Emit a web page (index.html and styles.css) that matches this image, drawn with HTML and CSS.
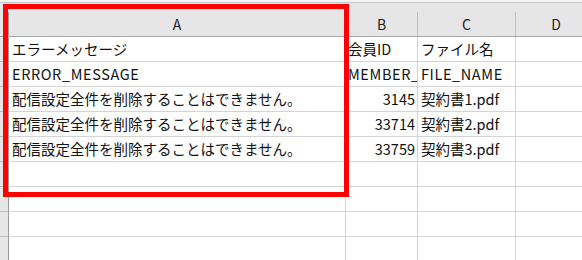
FILE: index.html
```html
<!DOCTYPE html>
<html lang="ja">
<head>
<meta charset="utf-8">
<link rel="stylesheet" href="styles.css">
</head>
<body>
<div class="sheet">
  <div class="topstrip"></div>
  <div class="header">
    <div class="hrow">
      <div class="hcell corner"></div>
      <div class="hcell">A</div>
      <div class="hcell">B</div>
      <div class="hcell">C</div>
      <div class="hcell last">D</div>
    </div>
  </div>
  <div class="grid">
    <div class="rh"></div><div class="c a">エラーメッセージ</div><div class="c b">会員ID</div><div class="c cc">ファイル名</div><div class="c d"></div>
    <div class="rh"></div><div class="c a caps">ERROR_MESSAGE</div><div class="c b caps">MEMBER_ID</div><div class="c cc caps">FILE_NAME</div><div class="c d"></div>
    <div class="rh"></div><div class="c a">配信設定全件を削除することはできません。</div><div class="c b num">3145</div><div class="c cc">契約書1.pdf</div><div class="c d"></div>
    <div class="rh"></div><div class="c a">配信設定全件を削除することはできません。</div><div class="c b num">33714</div><div class="c cc">契約書2.pdf</div><div class="c d"></div>
    <div class="rh"></div><div class="c a">配信設定全件を削除することはできません。</div><div class="c b num">33759</div><div class="c cc">契約書3.pdf</div><div class="c d"></div>
    <div class="rh"></div><div class="c a"></div><div class="c b"></div><div class="c cc"></div><div class="c d"></div>
    <div class="rh"></div><div class="c a"></div><div class="c b"></div><div class="c cc"></div><div class="c d"></div>
    <div class="rh"></div><div class="c a"></div><div class="c b"></div><div class="c cc"></div><div class="c d"></div>
    <div class="rh"></div><div class="c a"></div><div class="c b"></div><div class="c cc"></div><div class="c d"></div>
  </div>
  <div class="highlight"></div>
</div>
</body>
</html>
```

FILE: styles.css
```css
* { box-sizing: border-box; }
html, body {
  margin: 0;
  padding: 0;
  background: #ffffff;
  overflow: hidden;
}
body {
  width: 582px;
  height: 260px;
  font-family: "Noto Sans CJK JP", "Noto Sans", sans-serif;
  font-size: 14.5px;
  color: #111111;
}
.sheet {
  position: relative;
  width: 582px;
  height: 260px;
  overflow: hidden;
}
.topstrip {
  height: 3px;
  background: #f3f3f3;
  border-bottom: 1px solid #c6c6c6;
}
.header {
  background: #e6e6e6;
  padding-top: 9px;
}
.hrow {
  display: grid;
  grid-template-columns: 9px 337px 72px 98px 80px;
  height: 25px;
  border-bottom: 1px solid #a6a6a6;
}
.hcell {
  border-right: 1px solid #c0c0c0;
  text-align: center;
  line-height: 24px;
  font-size: 14px;
  color: #222222;
}
.hcell.corner { border-right: 1px solid #9a9a9a; }
.hcell.last { border-right: none; }
.grid {
  display: grid;
  grid-template-columns: 9px 337px 72px 98px 80px;
  grid-auto-rows: 25px;
}
.rh {
  background: #e6e6e6;
  border-right: 1px solid #9a9a9a;
  border-bottom: 1px solid #bdbdbd;
}
.c {
  border-right: 1px solid #d4d4d4;
  border-bottom: 1px solid #d4d4d4;
  line-height: 24px;
  white-space: nowrap;
  overflow: hidden;
}
.caps { letter-spacing: 0.6px; }
.a { padding-left: 3px; }
.b { padding-left: 2px; }
.num { text-align: right; padding-right: 2px; }
.cc { padding-left: 3px; }
.d { border-right: none; }
.highlight {
  position: absolute;
  left: 3px;
  top: 4px;
  width: 346px;
  height: 193px;
  border: 5px solid #ff0000;
}
```
